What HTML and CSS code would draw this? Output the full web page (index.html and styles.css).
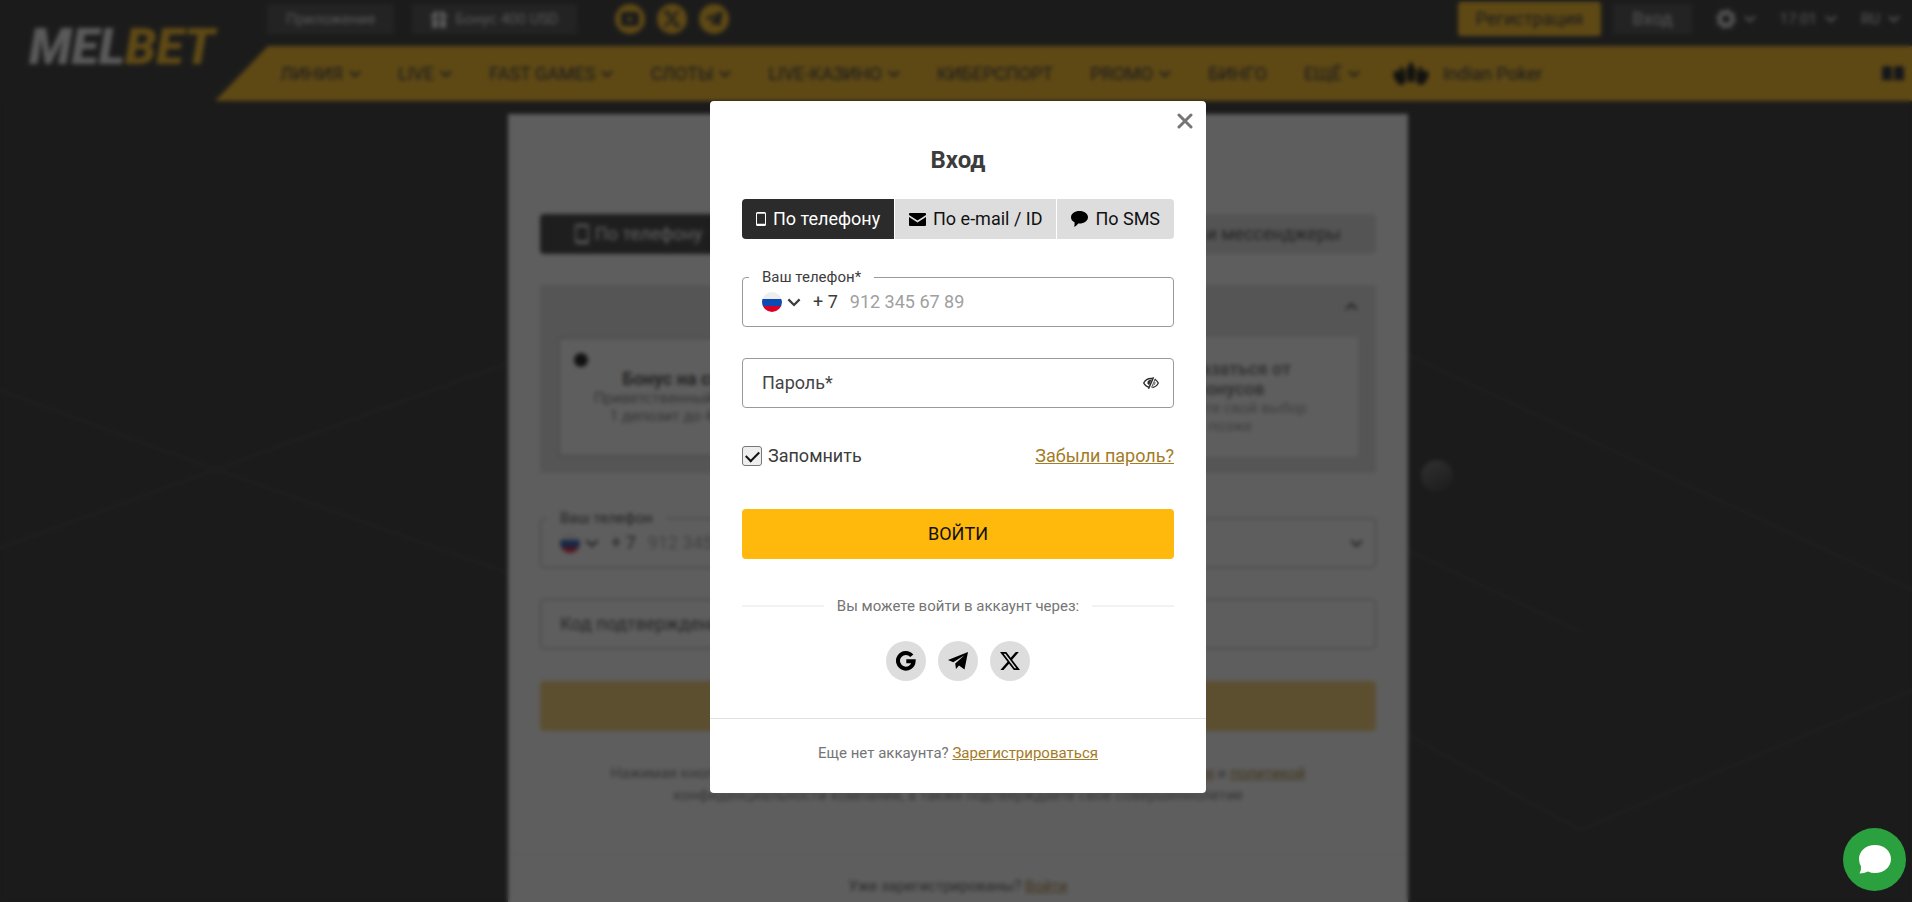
FILE: index.html
```html
<!DOCTYPE html>
<html lang="ru">
<head>
    <meta charset="UTF-8">
    <meta name="viewport" content="width=device-width, initial-scale=1.0">
    <title>Вход | MELBET</title>
    <link rel="stylesheet" href="styles.css">
</head>
<body>

    <!-- Shared icons -->
    <svg class="sprite" aria-hidden="true">
        <symbol id="chevron" viewBox="0 0 12 8"><path d="M1 1.2l5 5 5-5" fill="none" stroke="currentColor" stroke-width="2"/></symbol>
        <symbol id="phone" viewBox="0 0 10 14"><path fill="currentColor" fill-rule="evenodd" d="M1.500 0h7A1.500 1.500 0 0 1 10 1.500v11A1.500 1.500 0 0 1 8.500 14h-7A1.500 1.500 0 0 1 0 12.500v-11A1.500 1.500 0 0 1 1.500 0zM1 1.800v10h8v-10z"/></symbol>
        <symbol id="flag" viewBox="0 0 20 20">
            <clipPath id="round"><circle cx="10" cy="10" r="10"/></clipPath>
            <g clip-path="url(#round)">
                <path fill="#eeeeee" d="M0 0h20v7H0z"/>
                <path fill="#0b4bb3" d="M0 7h20v7H0z"/>
                <path fill="#d80027" d="M0 14h20v6H0z"/>
            </g>
        </symbol>
        <symbol id="telegram" viewBox="0 0 20 18"><path fill="currentColor" d="M20 0L0 8l5.200 2.200L16.500 3.200 7.200 11.400 8 17l3-3.600 5.500 4.100z"/></symbol>
        <symbol id="x" viewBox="0 0 24 24"><path fill="currentColor" d="M18.900 1.150h3.700l-8.050 9.200L24 22.850h-7.400l-5.800-7.600-6.650 7.600H.470l8.600-9.830L0 1.150h7.600l5.240 6.930zM17.600 20.650h2.050L6.490 3.240H4.300z"/></symbol>
    </svg>

    <div class="page">
        <svg class="decor" viewBox="0 0 1912 902" preserveAspectRatio="none" aria-hidden="true">
            <path d="M0 548L508 363M0 390Q200 465 508 573M1408 355L1912 590M1408 550L1580 632M1408 735L1580 830L1912 690"/>
        </svg>
        <span class="ball"></span>

        <header class="header">
            <a href="#" class="logo">MEL<span>BET</span></a>
            <div class="header-main">
                <div class="topbar">
                    <button class="chip">Приложение</button>
                    <button class="chip">
                        <svg width="16" height="17" viewBox="0 0 16 17" fill="#eee"><path d="M0 3h7v4H0zM9 3h7v4H9zM1 8h6v9H1zM9 8h6v9H9zM3 0h4v3H3zM9 0h4v3H9z"/></svg>
                        Бонус 400 USD
                    </button>
                    <div class="top-social">
                        <a href="#" aria-label="YouTube"><svg width="18" height="14" viewBox="0 0 18 14"><path fill="currentColor" fill-rule="evenodd" d="M3 0h12a3 3 0 0 1 3 3v8a3 3 0 0 1-3 3H3a3 3 0 0 1-3-3V3a3 3 0 0 1 3-3zm4 4v6l5-3z"/></svg></a>
                        <a href="#" aria-label="X"><svg width="18" height="18"><use href="#x"/></svg></a>
                        <a href="#" aria-label="Telegram"><svg width="18" height="16"><use href="#telegram"/></svg></a>
                    </div>
                    <div class="top-right">
                        <button class="register">Регистрация</button>
                        <button class="chip login">Вход</button>
                        <button class="tool" aria-label="Настройки">
                            <svg width="20" height="20" viewBox="0 0 20 20"><circle cx="10" cy="10" r="6" fill="none" stroke="currentColor" stroke-width="4"/><circle cx="10" cy="10" r="9" fill="none" stroke="currentColor" stroke-width="2" stroke-dasharray="4 3"/></svg>
                            <svg width="12" height="8"><use href="#chevron"/></svg>
                        </button>
                        <button class="tool">17:01 <svg width="12" height="8"><use href="#chevron"/></svg></button>
                        <button class="tool">RU <svg width="12" height="8"><use href="#chevron"/></svg></button>
                    </div>
                </div>
                <nav class="nav">
                    <a href="#">ЛИНИЯ <svg width="12" height="8"><use href="#chevron"/></svg></a>
                    <a href="#">LIVE <svg width="12" height="8"><use href="#chevron"/></svg></a>
                    <a href="#">FAST GAMES <svg width="12" height="8"><use href="#chevron"/></svg></a>
                    <a href="#">СЛОТЫ <svg width="12" height="8"><use href="#chevron"/></svg></a>
                    <a href="#">LIVE-КАЗИНО <svg width="12" height="8"><use href="#chevron"/></svg></a>
                    <a href="#">КИБЕРСПОРТ</a>
                    <a href="#">PROMO <svg width="12" height="8"><use href="#chevron"/></svg></a>
                    <a href="#">БИНГО</a>
                    <a href="#">ЕЩЁ <svg width="12" height="8"><use href="#chevron"/></svg></a>
                    <a href="#" class="poker">
                        <svg width="36" height="26" viewBox="0 0 36 26" fill="#000"><path d="M18 0l5 9-2 12h-6L13 9zM8 4l4 7 1 9-3 4-5-1-5-8 2-6 4 2zM28 4l-4 7-1 9 3 4 5-1 5-8-2-6-4 2z"/></svg>
                        Indian Poker
                    </a>
                    <a href="#" class="rules" aria-label="Правила"><svg width="22" height="16" viewBox="0 0 22 16" fill="#0d1020"><path d="M0 1q5-2 10 0v14q-5-2-10 0zM12 1q5-2 10 0v14q-5-2-10 0z"/></svg></a>
                </nav>
            </div>
        </header>

        <!-- Registration form -->
        <main class="main">
            <section class="card">
                <div class="card-tabs">
                    <button class="card-tab active"><svg width="14" height="20"><use href="#phone"/></svg>По телефону</button>
                    <button class="card-tab wide" aria-label="По e-mail"></button>
                    <button class="card-tab">Соцсети и мессенджеры</button>
                </div>

                <div class="bonus">
                    <button class="bonus-head" aria-label="Свернуть"><svg width="13" height="9"><use href="#chevron"/></svg></button>
                    <div class="bonus-list">
                        <label class="bonus-item selected">
                            <input type="radio" name="bonus" checked>
                            <b>Бонус на спорт</b>
                            <span>Приветственный бонус на 1 депозит до 400 USD</span>
                        </label>
                        <label class="bonus-item">
                            <input type="radio" name="bonus" aria-label="Казино">
                        </label>
                        <label class="bonus-item">
                            <input type="radio" name="bonus">
                            <b>Отказаться от бонусов</b>
                            <span>Сделайте свой выбор позже</span>
                        </label>
                    </div>
                </div>

                <div class="card-row">
                    <fieldset class="phone-field">
                        <legend><label for="regPhone">Ваш телефон</label></legend>
                        <div class="phone-line">
                            <button class="country" aria-label="Страна"><svg width="20" height="20"><use href="#flag"/></svg><svg width="14" height="9"><use href="#chevron"/></svg></button>
                            <span>+ 7</span>
                            <input type="tel" id="regPhone" placeholder="912 345 67 89">
                        </div>
                    </fieldset>
                    <div class="select-box">
                        <select aria-label="Валюта"><option>RUB</option></select>
                        <svg width="13" height="9"><use href="#chevron"/></svg>
                    </div>
                </div>
                <div class="field">
                    <input type="text" placeholder="Код подтверждения" aria-label="Код подтверждения">
                </div>
                <button class="card-submit" aria-label="Зарегистрироваться"></button>
                <p class="terms">Нажимая кнопку Зарегистрироваться, Вы соглашаетесь с <a href="#">условиями использования</a> и <a href="#">политикой</a><br>конфиденциальности компании, а также подтверждаете свое совершеннолетие</p>
                <div class="card-footer">Уже зарегистрированы? <a href="#">Войти</a></div>
            </section>
        </main>
    </div>

    <!-- Login popup -->
    <div class="overlay">
        <div class="modal" role="dialog" aria-labelledby="loginTitle">
            <button class="close" aria-label="Закрыть">
                <svg width="16" height="16" viewBox="0 0 16 16"><path d="M2 2l12 12M14 2L2 14" stroke="#757575" stroke-width="3" stroke-linecap="round"/></svg>
            </button>
            <form class="modal-body">
                <h2 id="loginTitle">Вход</h2>
                <div class="tabs">
                    <button type="button" class="tab active"><svg width="10" height="14"><use href="#phone"/></svg>По телефону</button>
                    <button type="button" class="tab"><svg width="17" height="13" viewBox="0 0 17 13"><path d="M1 0h15q1 0 1 1v1L8.500 7.500 0 2V1q0-1 1-1zM0 4l8.500 5.500L17 4v8q0 1-1 1H1q-1 0-1-1z"/></svg>По e-mail / ID</button>
                    <button type="button" class="tab"><svg width="17" height="16" viewBox="0 0 17 16"><path d="M8.500 0C13.200 0 17 2.700 17 6.200s-3.800 6.300-8.500 6.300l-1.200-.1Q5.500 15 2.800 15.700 4 13.800 3.500 11.300 0 9.500 0 6.200C0 2.700 3.800 0 8.500 0z"/></svg>По SMS</button>
                </div>

                <fieldset class="phone-field">
                    <legend><label for="loginPhone">Ваш телефон*</label></legend>
                    <div class="phone-line">
                        <button type="button" class="country" aria-label="Страна"><svg width="20" height="20"><use href="#flag"/></svg><svg width="14" height="9"><use href="#chevron"/></svg></button>
                        <span>+ 7</span>
                        <input type="tel" id="loginPhone" placeholder="912 345 67 89">
                    </div>
                </fieldset>

                <div class="field">
                    <input type="password" placeholder="Пароль*" aria-label="Пароль">
                    <button type="button" class="eye" aria-label="Показать пароль">
                        <svg width="16" height="12" viewBox="0 0 16 12" fill="none" stroke="#2b2b2b">
                            <path d="M6 10.300Q2.500 9.500.700 6 3 1.500 8 1.500h1.500M11.800 2.300Q14 3.500 15.300 6 13.300 10 9.300 10.500" stroke-width="1.300"/>
                            <path d="M10.500.300L5.500 11.700" stroke-width="1.500"/>
                            <path d="M8.500 2.500Q4 3 4.500 6.200l1.500 2.300z" fill="#2b2b2b" stroke="none"/>
                            <path d="M12.300 1.800L8.500 10.500M12 5q.2 2.300-1.500 3.300" stroke-width=".8"/>
                        </svg>
                    </button>
                </div>

                <div class="options">
                    <label class="remember"><input type="checkbox" checked>Запомнить</label>
                    <a href="#">Забыли пароль?</a>
                </div>

                <button type="submit" class="submit">ВОЙТИ</button>

                <div class="divider">Вы можете войти в аккаунт через:</div>

                <div class="social">
                    <a href="#" aria-label="Google"><svg width="20" height="20" viewBox="0 0 20 20" fill="none" stroke="#000" stroke-width="4"><path d="M15.800 4.800A7.800 7.800 0 1 0 17.600 10.300H10.300"/></svg></a>
                    <a href="#" aria-label="Telegram"><svg width="20" height="18"><use href="#telegram"/></svg></a>
                    <a href="#" aria-label="X"><svg width="20" height="20"><use href="#x"/></svg></a>
                </div>
            </form>
            <div class="modal-footer">Еще нет аккаунта? <a href="#">Зарегистрироваться</a></div>
        </div>
    </div>

    <button class="chat" aria-label="Чат">
        <svg width="32" height="29" viewBox="0 0 32 29"><path fill="#fff" d="M16 0c9 0 16 6 16 14s-7 14-16 14q-4 0-7-1.500Q5 28.500.500 28.500 2.500 25.500 2 21.500 0 18 0 14C0 6 7 0 16 0z"/></svg>
    </button>

</body>
</html>
```
FILE: styles.css
```css
* {
    margin: 0;
    padding: 0;
    box-sizing: border-box;
}

body {
    font-family: Roboto, 'Liberation Sans', sans-serif;
    font-size: 18px;
    line-height: 20px;
    color: #3c3c3c;
    background-color: #1e1e1e;
    overflow: hidden;
}

button, input, select {
    font: inherit;
    color: inherit;
    border: none;
    background: none;
}

button {
    display: flex;
    align-items: center;
    justify-content: center;
    cursor: pointer;
}

a {
    color: #a47b27;
}

svg {
    display: block;
    flex-shrink: 0;
}

.sprite {
    position: absolute;
    width: 0;
    height: 0;
}

.page {
    position: relative;
    height: 100vh;
    overflow: hidden;
}

/* Background picture */
.decor {
    position: absolute;
    width: 100%;
    height: 100%;
    fill: none;
    stroke: #2a2a2a;
    stroke-width: 4px;
}

.ball {
    position: absolute;
    left: 1421px;
    top: 460px;
    width: 32px;
    height: 32px;
    border-radius: 50%;
    background: linear-gradient(150deg, #6a6a6a, #1e1e1e);
}

/* Header */
.header {
    position: relative;
    display: flex;
    background-color: #212121;
}

.logo {
    width: 215px;
    padding: 18px 0 0 29px;
    font-size: 50px;
    line-height: 58px;
    font-weight: 900;
    font-style: italic;
    color: #f0f0f0;
    text-decoration: none;
}

.logo span {
    color: #ffb80c;
}

.header-main {
    flex: 1;
    min-width: 0;
}

.topbar {
    display: flex;
    align-items: center;
    height: 38px;
    margin-bottom: 8px;
    padding: 0 12px 0 52px;
    font-size: 15px;
    color: #ddd;
}

.chip {
    gap: 8px;
    height: 30px;
    margin-right: 18px;
    padding: 0 19px;
    background-color: #3a3a3a;
    border-radius: 3px;
}

.top-social {
    display: flex;
    gap: 12px;
    margin-left: 20px;
}

.top-social a {
    display: flex;
    align-items: center;
    justify-content: center;
    width: 30px;
    height: 30px;
    border-radius: 50%;
    background-color: #ffb80c;
    color: #212121;
}

.top-right {
    display: flex;
    align-items: center;
    margin-left: auto;
}

.register {
    height: 34px;
    margin-right: 12px;
    padding: 0 18px;
    font-size: 18px;
    border-radius: 3px;
    color: #212121;
    background-color: #ffb80c;
}

.login {
    font-size: 18px;
    margin-right: 24px;
}

.tool {
    gap: 8px;
    margin-right: 24px;
}

.tool:last-child {
    margin-right: 0;
}

.nav {
    display: flex;
    align-items: center;
    gap: 37px;
    height: 55px;
    padding: 0 8px 0 65px;
    background-color: #ffb80c;
    clip-path: polygon(53px 0, 100% 0, 100% 100%, 0 100%);
}

.nav a {
    display: flex;
    align-items: center;
    gap: 6px;
    color: #212121;
    text-decoration: none;
    white-space: nowrap;
}

.nav .poker {
    gap: 14px;
    margin-left: -4px;
}

.nav .rules {
    margin-left: auto;
}

/* Registration card */
.main {
    position: relative;
    padding: 13px 0 0 4px;
}

.card {
    max-width: 900px;
    margin: 0 auto;
    padding: 100px 32px 0;
    background-color: #fff;
}

.card-tabs {
    display: flex;
    height: 40px;
    border-radius: 4px;
    overflow: hidden;
}

.card-tab {
    gap: 6px;
    padding: 0 35px;
    background-color: #ddd;
}

.card-tab.wide {
    flex: 1;
}

.card-tab.active {
    color: #fff;
    background-color: #2b2b2b;
}

.bonus {
    margin: 31px 0 35px;
    padding: 0 18px 16px;
    background-color: #e0e0e0;
}

.bonus-head {
    width: 100%;
    height: 52px;
    padding-bottom: 10px;
    justify-content: flex-end;
}

.bonus-head svg {
    transform: rotate(180deg);
}

.bonus-list {
    display: grid;
    grid-template-columns: repeat(3, 1fr);
    gap: 16px;
}

.bonus-item {
    position: relative;
    display: flex;
    flex-direction: column;
    align-items: center;
    justify-content: center;
    min-height: 120px;
    padding: 0 30px;
    text-align: center;
    background-color: #fff;
    color: #777;
}

.bonus-item.selected {
    border: 2px solid #c4c4c4;
    color: #3c3c3c;
}

.bonus-item b {
    max-width: 150px;
}

.bonus-item span {
    font-size: 15px;
    line-height: 18px;
    color: #999;
}

.bonus-item.selected span {
    color: #777;
}

.bonus-item input {
    position: absolute;
    top: 14px;
    left: 14px;
    width: 14px;
    height: 14px;
    appearance: none;
    border-radius: 50%;
}

.bonus-item input:checked {
    background-color: #000;
}

.card-row {
    display: grid;
    grid-template-columns: 1fr 1fr;
    align-items: end;
    gap: 20px;
}

.select-box {
    display: flex;
    align-items: center;
    height: 50px;
    padding: 0 12px 0 20px;
    border: 1px solid #999;
    border-radius: 4px;
}

.select-box select {
    flex: 1;
    appearance: none;
}

.card-submit {
    width: 100%;
    height: 50px;
    margin: 32px 0 31px;
    border-radius: 4px;
    background-color: #f8cd66;
}

.terms {
    font-size: 15px;
    line-height: 22px;
    text-align: center;
    color: #777;
}

.card-footer {
    margin: 47px -32px 0;
    padding: 22px 0 44px;
    font-size: 15px;
    text-align: center;
    color: #555;
    border-top: 1px solid #e0e0e0;
}

/* Popup */
.overlay {
    position: fixed;
    inset: 0;
    display: flex;
    align-items: center;
    justify-content: center;
    padding: 0 0 8px 4px;
    background-color: rgba(26, 26, 26, 0.7);
    backdrop-filter: blur(2px);
}

.modal {
    position: relative;
    width: 496px;
    background-color: #fff;
    border-radius: 4px;
}

.close {
    position: absolute;
    top: 12px;
    right: 13px;
}

.modal-body {
    padding: 45px 32px 37px;
}

.modal h2 {
    margin-bottom: 25px;
    font-size: 24px;
    line-height: 28px;
    text-align: center;
}

.tabs {
    display: flex;
    gap: 1px;
    height: 40px;
    margin-bottom: 28px;
    border-radius: 4px;
    overflow: hidden;
}

.tab {
    flex: 1 0 auto;
    gap: 7px;
    padding: 0 12px;
    color: #111;
    background-color: #ddd;
}

.tab.active {
    color: #fff;
    background-color: #2b2b2b;
}

/* Fields */
.phone-field {
    min-width: 0;
    padding: 0 19px 9px 6px;
    border: 1px solid #999;
    border-radius: 4px;
}

.phone-field legend {
    padding: 0 13px;
    font-size: 15px;
}

.phone-line {
    display: flex;
    align-items: center;
    height: 30px;
    padding-left: 13px;
}

.phone-line span {
    margin: 0 12px;
}

.phone-line input {
    flex: 1;
    min-width: 0;
}

.phone-line input::placeholder {
    color: #a0a0a0;
}

.country {
    gap: 5px;
}

.field {
    display: flex;
    align-items: center;
    height: 50px;
    margin-top: 31px;
    padding: 0 14px 0 19px;
    border: 1px solid #999;
    border-radius: 4px;
}

.field input {
    flex: 1;
    min-width: 0;
}

.field input::placeholder {
    color: #444;
}

.options {
    display: flex;
    align-items: center;
    justify-content: space-between;
    margin: 38px 0 43px;
}

.remember {
    display: flex;
    align-items: center;
    gap: 6px;
}

.remember input {
    display: flex;
    justify-content: center;
    width: 20px;
    height: 20px;
    appearance: none;
    border: 1px solid #777;
    border-radius: 3px;
    background-color: #eee;
}

.remember input:checked::after {
    content: '';
    width: 11px;
    height: 6px;
    margin-top: 4px;
    border: solid #111;
    border-width: 0 0 2px 2px;
    transform: rotate(-45deg);
}

.submit {
    width: 100%;
    height: 50px;
    border-radius: 4px;
    color: #111;
    background-color: #ffb80c;
}

.divider {
    display: flex;
    align-items: center;
    gap: 13px;
    margin: 37px 0 25px;
    font-size: 15px;
    color: #757575;
}

.divider::before,
.divider::after {
    content: '';
    flex: 1;
    height: 2px;
    background-color: #f2f2f2;
}

.social {
    display: flex;
    justify-content: center;
    gap: 12px;
}

.social a {
    display: flex;
    align-items: center;
    justify-content: center;
    width: 40px;
    height: 40px;
    border-radius: 50%;
    color: #000;
    background-color: #ddd;
}

.modal-footer {
    padding: 24px 0 30px;
    font-size: 15px;
    text-align: center;
    color: #757575;
    border-top: 1px solid #e2e2e2;
}

/* Support chat */
.chat {
    position: fixed;
    right: 6px;
    bottom: 11px;
    width: 63px;
    height: 63px;
    border-radius: 50%;
    background-color: #2ba03f;
}
```
